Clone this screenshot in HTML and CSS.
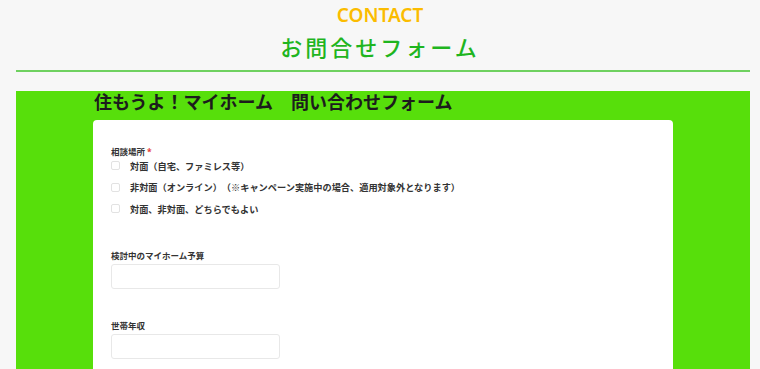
FILE: index.html
```html
<!DOCTYPE html>
<html lang="ja">
<head>
  <meta charset="UTF-8" />
  <meta name="viewport" content="width=device-width, initial-scale=1.0"/>
  <title>お問合せフォーム</title>
  <link rel="stylesheet" href="styles.css">
</head>
<body>
  <header class="page-head">
    <p class="eyebrow">CONTACT</p>
    <h1 class="page-title">お問合せフォーム</h1>
  </header>
  <hr class="divider" />

  <section class="form-panel">
    <h2 class="form-title">住もうよ！マイホーム　問い合わせフォーム</h2>

    <form class="card">
      <div class="field">
        <p class="label">相談場所<span class="req">*</span></p>
        <div class="options">
          <label class="option"><span class="check"></span>対面（自宅、ファミレス等）</label>
          <label class="option"><span class="check"></span>非対面（オンライン）（※キャンペーン実施中の場合、適用対象外となります）</label>
          <label class="option"><span class="check"></span>対面、非対面、どちらでもよい</label>
        </div>
      </div>

      <div class="field field-gap">
        <p class="label">検討中のマイホーム予算</p>
        <input type="text" class="text-input" />
      </div>

      <div class="field field-gap2">
        <p class="label">世帯年収</p>
        <input type="text" class="text-input" />
      </div>
    </form>
  </section>
</body>
</html>
```

FILE: styles.css
```css
* {
  margin: 0;
  padding: 0;
  box-sizing: border-box;
  font-family: "Noto Sans", "Noto Sans CJK JP", sans-serif;
  text-spacing-trim: space-all;
}

body {
  background: #f7f7f7;
  overflow: hidden;
}

.page-head {
  text-align: center;
  padding-top: 4px;
}

.eyebrow {
  font-size: 19px;
  font-weight: 600;
  line-height: 22px;
  color: #fbbc00;
}

.page-title {
  font-family: "Noto Sans CJK JP", sans-serif;
  font-size: 22px;
  font-weight: 500;
  line-height: 32px;
  letter-spacing: 3px;
  color: #1fb51f;
  margin-top: 4px;
}

.divider {
  border: 0;
  height: 2px;
  background: #6fd160;
  margin: 8px 10px 0 16px;
}

.form-panel {
  background: #57df0b;
  margin: 19px 10px 0 16px;
  padding: 0 77px 40px;
}

.form-title {
  font-family: "Noto Sans CJK JP", sans-serif;
  font-size: 18px;
  font-weight: 700;
  line-height: 20px;
  color: #1c1c1c;
  padding-left: 1px;
}

.card {
  background: #fff;
  border-radius: 4px;
  margin-top: 9px;
  padding: 25px 18px 30px;
  min-height: 300px;
}

.label {
  font-family: "Noto Sans CJK JP", sans-serif;
  font-size: 8.5px;
  font-weight: 700;
  line-height: 12px;
  color: #333;
}

.req {
  color: #e53935;
  margin-left: 2px;
}

.options {
  display: flex;
  flex-direction: column;
  margin-top: -3px;
}

.option {
  display: flex;
  align-items: center;
  height: 21.5px;
  font-family: "Noto Sans CJK JP", sans-serif;
  font-size: 9.2px;
  font-weight: 700;
  color: #333;
}

.check {
  width: 9px;
  height: 9px;
  border: 1px solid #e2e2e2;
  border-radius: 2px;
  margin-right: 10px;
  flex-shrink: 0;
}

.field-gap {
  margin-top: 29px;
}

.field-gap2 {
  margin-top: 30px;
}

.text-input {
  display: block;
  width: 169px;
  height: 25px;
  margin-top: 3px;
  border: 1px solid #e8e8e8;
  border-radius: 3px;
  outline: none;
  background: #fff;
}
```
